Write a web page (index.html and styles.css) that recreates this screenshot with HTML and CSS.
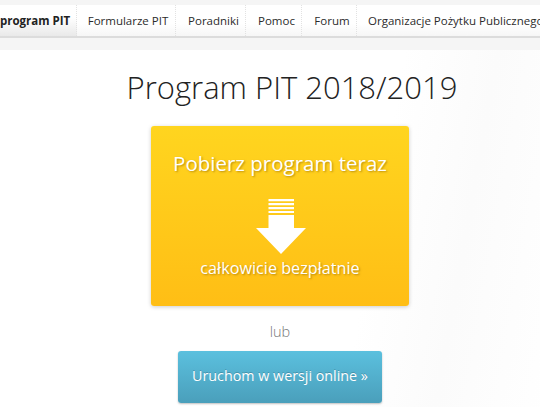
FILE: index.html
```html
<!DOCTYPE html>
<html lang="pl">
<head>
<meta charset="utf-8">
<title>Program PIT 2018/2019</title>
<link rel="stylesheet" href="styles.css">
</head>
<body>
<header class="topband">
  <nav class="nav">
    <a class="nav-item nav-active first">program PIT</a>
    <a class="nav-item w-formularze">Formularze PIT</a>
    <a class="nav-item w-poradniki">Poradniki</a>
    <a class="nav-item w-pomoc">Pomoc</a>
    <a class="nav-item w-forum">Forum</a>
    <a class="nav-item last">Organizacje Pożytku Publicznego</a>
  </nav>
</header>
<main class="main">
  <h1 class="title">Program PIT 2018/2019</h1>
  <a class="download">
    <span class="download-head">Pobierz program teraz</span>
    <svg class="arrow" width="50" height="55" viewBox="0 0 50 55" aria-hidden="true">
      <path d="M12.5 0H38V2.3H12.5zM12.5 4H38V6.3H12.5zM12.5 8H38V10.3H12.5zM12.5 12H38V14H12.5zM12.5 16H38V29H50L25 55L0 29H12.5z" fill="#fff"/>
    </svg>
    <span class="download-sub">całkowicie bezpłatnie</span>
  </a>
  <p class="or">lub</p>
  <a class="online">Uruchom w wersji online »</a>
</main>
</body>
</html>
```

FILE: styles.css
```css
html, body {
  margin: 0;
  height: 100%;
  overflow: hidden;
  background: #fff;
  font-family: "Open Sans", "Noto Sans", sans-serif;
}
.topband {
  background: #f5f5f5;
  height: 50px;
  padding-top: 5px;
  box-sizing: border-box;
}
.nav {
  display: flex;
  height: 33px;
  background: #fff;
  border-bottom: 2px solid #dcdcdc;
  box-sizing: border-box;
  overflow: hidden;
  white-space: nowrap;
  font-size: 11.5px;
  line-height: 31px;
  color: #2b2b2b;
}
.nav-item {
  flex: none;
  box-sizing: border-box;
  text-align: center;
  border-right: 1px dotted #e2e2e2;
  background: linear-gradient(#fff 60%, #f6f6f6);
}
.first {
  width: 77px;
  font-weight: 700;
  text-align: right;
  padding-right: 11px;
  color: #222;
  background: linear-gradient(#fff 40%, #e9e9e9);
}
.w-formularze { width: 99px; padding-left: 4px; }
.w-poradniki { width: 70px; padding-left: 6px; }
.w-pomoc { width: 56px; padding-left: 6px; }
.w-forum { width: 55px; padding-left: 6px; }
.last { border-right: 0; padding-left: 11px; }
.main {
  width: 560px;
  height: 357px;
  display: flex;
  flex-direction: column;
  align-items: center;
  background: linear-gradient(100deg, #fff 65%, #fbfbfb 80%, #fff);
}
.title {
  margin: 14px 0 0;
  padding-left: 24px;
  font-size: 31px;
  line-height: 46px;
  font-weight: 300;
  color: #222;
}
.download {
  margin-top: 16px;
  width: 258px;
  height: 180px;
  box-sizing: border-box;
  border-radius: 3px;
  background: linear-gradient(#ffd51f, #ffbe15);
  box-shadow: 0 1px 4px rgba(0,0,0,.2);
  display: flex;
  flex-direction: column;
  align-items: center;
  color: #fff;
  text-shadow: 1px 1px 2px rgba(130,90,0,.55);
}
.download-head {
  margin-top: 22px;
  font-size: 20.5px;
  line-height: 30px;
}
.arrow {
  margin: 21px 0 0 1px;
  display: block;
}
.download-sub {
  margin-top: 3px;
  font-size: 16.2px;
  line-height: 22px;
}
.or {
  margin: 16px 0 0;
  font-size: 14.5px;
  line-height: 20px;
  font-weight: 300;
  color: #777;
}
.online {
  margin-top: 9px;
  width: 204px;
  height: 52px;
  box-sizing: border-box;
  border-radius: 3px;
  background: linear-gradient(#5bc0de, #4a9fbb);
  box-shadow: 0 1px 2px rgba(0,0,0,.25);
  color: #fff;
  font-size: 14.3px;
  line-height: 50px;
  text-align: center;
  text-shadow: 0 -1px 0 rgba(0,0,0,.2);
}
```
